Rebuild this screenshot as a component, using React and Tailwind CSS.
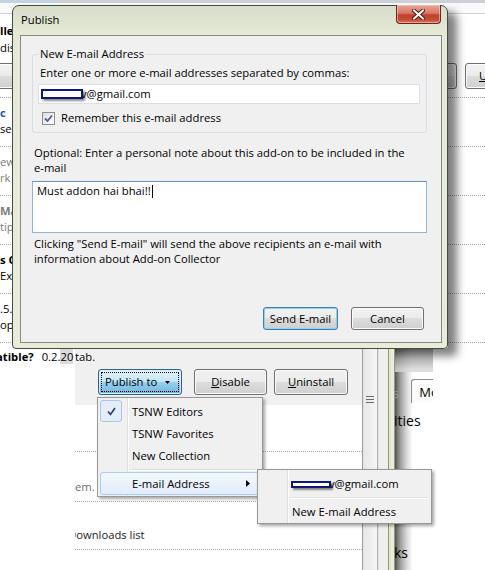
import React from "react";

const btnGray =
  "flex items-center justify-center rounded-[3px] border border-[#707070] bg-[linear-gradient(180deg,#f2f2f2_0%,#ebebeb_50%,#dddddd_50%,#cfcfcf_100%)] shadow-[inset_0_0_0_1px_#fbfbfb]";

const Redact = ({ className = "" }) => (
  <span
    className={`relative z-10 inline-block border-2 border-[#0b1a78] bg-white shadow-[2px_2px_2px_rgba(0,0,0,0.45)] ${className}`}
  />
);

const Check = () => (
  <svg width="9" height="9" viewBox="0 0 9 9">
    <path d="M1 4.5 L3.5 7.5 L8 1" fill="none" stroke="#22378a" strokeWidth="1.6" />
  </svg>
);

const CheckBox = () => (
  <div className="flex h-[13px] w-[13px] items-center justify-center border border-[#8e8f8f] bg-[linear-gradient(135deg,#dedede,#fdfdfd)]">
    <svg width="9" height="9" viewBox="0 0 9 9">
      <path d="M1 4.5 L3.5 7 L8 1.5" fill="none" stroke="#4a5f97" strokeWidth="1.8" />
    </svg>
  </div>
);

const AddonRow = ({ title, desc, titleClass = "font-bold", descClass = "" }) => (
  <div className="flex h-[49px] flex-col border-b border-dotted border-[#a8a8a8] pt-[7px] whitespace-nowrap">
    <div className={titleClass}>{title}</div>
    <div className={descClass}>{desc}</div>
  </div>
);

const AddonList = () => (
  <div className="flex flex-col">
    <div className="flex h-[3px]">
      <div className="w-[55px] bg-[#c3d3e5]" />
      <div className="flex-1 bg-[#cdd1d6]" />
    </div>
    <div className="h-[11px] border-b border-[#d2d2d2] bg-[#fafafa]" />
    <div className="flex h-[84px] flex-col border-b border-dotted border-[#a8a8a8] pt-[9px] whitespace-nowrap">
      <div className="font-bold">llector</div>
      <div className="mt-[1px]">disable</div>
      <div className="mt-[7px] flex h-[26px] justify-between">
        <div className={`${btnGray} -ml-[40px] w-[70px]`} />
        <div className="-mr-[60px] flex gap-[8px]">
          <div className={`${btnGray} w-[60px]`} />
          <div className={`${btnGray} w-[80px] justify-start pl-[13px]`}>
            <span className="underline">U</span>ninstall
          </div>
        </div>
      </div>
    </div>
    <AddonRow title="c" desc="se" titleClass="font-bold text-[#1d58b0]" />
    <AddonRow title="ew" desc="rk" titleClass="text-[#7d7d7d]" descClass="text-[#7d7d7d]" />
    <AddonRow title="Ma" desc="tip" titleClass="font-bold text-[#7d7d7d]" descClass="text-[#7d7d7d]" />
    <AddonRow title="s C" desc="Exp" />
    <AddonRow title=".5." desc="op" titleClass="" />
  </div>
);

const LowerPanel = () => (
  <div className="absolute left-0 top-[349px] z-20 flex h-[221px] w-[362px]">
    <div className="w-[75px] overflow-hidden bg-white whitespace-nowrap">
      <div className="flex h-[16px]">
        <span className="-ml-[4px] font-bold">atible?</span>
        <span className="ml-[8px]">
          0.2.<span className="bg-[#dadada]">20</span>
        </span>
      </div>
    </div>
    <div className="flex w-[287px] flex-col overflow-hidden">
      <div className="flex h-[56px] flex-col bg-[#f0f0f0]">
        <div>tab.</div>
        <div className="mt-[4px] ml-[23px] flex h-[26px]">
          <div className="flex w-[84px] rounded-[3px] border border-[#2c628b] bg-[linear-gradient(180deg,#e5f4fc_0%,#c4e5f6_50%,#98d1ef_50%,#6db6de_100%)] p-[2px] shadow-[inset_0_0_0_1px_#d9effb]">
            <div className="flex flex-1 items-center border border-dotted border-black pl-[3px]">
              Publish to
              <svg className="ml-[8px]" width="5" height="3" viewBox="0 0 5 3">
                <path d="M0 0 H5 L2.5 3 Z" fill="#000" />
              </svg>
            </div>
          </div>
          <div className={`${btnGray} ml-[12px] w-[73px]`}>
            <span className="underline">D</span>isable
          </div>
          <div className={`${btnGray} ml-[7px] w-[74px]`}>
            <span className="underline">U</span>ninstall
          </div>
        </div>
      </div>
      <div className="flex flex-1 flex-col bg-white whitespace-nowrap">
        <div className="h-[47px] border-b border-dotted border-[#a8a8a8]" />
        <div className="h-[50px] border-b border-dotted border-[#a8a8a8] pt-[27px] text-[#6d6d6d]">em.</div>
        <div className="h-[48px] border-b border-dotted border-[#a8a8a8] pt-[25px] -ml-[7px] text-[#222]">
          Downloads list
        </div>
      </div>
    </div>
  </div>
);

const SideStrip = () => (
  <div className="absolute left-[362px] top-[349px] z-20 flex h-[221px] w-[71px]">
    <div className="w-[1px] bg-[#9a9a9a]" />
    <div className="flex w-[14px] flex-col items-center bg-[linear-gradient(90deg,#e6e6e6,#f6f6f6)] pt-[47px]">
      <svg width="8" height="7" viewBox="0 0 8 7">
        <path d="M0 0.5 H8 M0 3.5 H8 M0 6.5 H8" stroke="#6a6a6a" strokeWidth="1" />
      </svg>
    </div>
    <div className="w-[1px] bg-[#b2b2b2]" />
    <div className="w-[1px] bg-[#e2e2e2]" />
    <div className="w-[9px] bg-[#efefef]" />
    <div className="w-[7px] border-x border-[#8f987f] bg-[linear-gradient(90deg,#dfe6c4,#edf0dc)]" />
    <div className="flex flex-1 flex-col overflow-hidden whitespace-nowrap bg-[linear-gradient(90deg,#555_0px,#9a9a9a_5px,#dcdcdc_12px,#fff_18px)]">
      <div className="h-[23px] bg-[linear-gradient(180deg,#2f2f2f,#9b9b9b_10px,#d6d6d6_20px)] opacity-80" />
      <div className="mt-[7px] flex h-[24px] items-end">
        <span className="mb-[2px] -ml-[2px] text-[13px] text-[#999]">s</span>
        <div className="ml-[12px] flex h-[24px] flex-1 items-center rounded-tl-[3px] border-l border-t border-[#8c8c8c] bg-[#fbfbfb] pl-[7px] text-[13px]">
          Mo
        </div>
      </div>
      <div className="mt-[9px] -ml-[1px] text-[14px] leading-[18px]">ities</div>
      <div className="mt-[114px] -ml-[1px] text-[14px] leading-[18px]">ks</div>
    </div>
  </div>
);

const CloseButton = () => (
  <div className="-mt-[1px] mr-[1px] flex h-[19px] w-[45px] items-center justify-center rounded-b-[4px] border border-t-0 border-[#6b2419] bg-[linear-gradient(180deg,#e8a394_0%,#d87a68_45%,#c2412c_55%,#c64a32_80%,#d8765a_100%)] shadow-[inset_0_0_0_1px_rgba(255,210,200,0.55)]">
    <svg width="13" height="11" viewBox="0 0 13 11">
      <path d="M2 1.5 L11 9.5 M11 1.5 L2 9.5" stroke="#4e1a12" strokeWidth="4" strokeLinecap="square" />
      <path d="M2 1.5 L11 9.5 M11 1.5 L2 9.5" stroke="#ffffff" strokeWidth="2" strokeLinecap="square" />
    </svg>
  </div>
);

const PublishDialog = () => (
  <div className="absolute left-[12px] top-[5px] z-10 flex h-[344px] w-[436px] flex-col rounded-t-[7px] rounded-b-[4px] border border-[#434c40] bg-[linear-gradient(180deg,#d7decb_0px,#e5e9d6_28px,#e9ecdb_100%)] pl-[7px] pr-[5px] pb-[5px] shadow-[9px_7px_9px_rgba(0,0,0,0.5)]">
    <div className="flex h-[29px] justify-between">
      <span className="pt-[6px] pl-[1px]">Publish</span>
      <CloseButton />
    </div>
    <div className="flex flex-1 flex-col border border-[#838d7f] bg-[#f0f0f0]">
      <fieldset className="mt-[10px] ml-[11px] mr-[14px] rounded-[3px] border border-[#d5dfe5] px-[6px] pb-[6px]">
        <legend className="px-[1px]">New E-mail Address</legend>
        <div className="mt-[3px] ml-[1px]">Enter one or more e-mail addresses separated by commas:</div>
        <div className="mt-[3px] -ml-[1px] flex h-[20px] w-[382px] items-center border border-[#dcdfe3] bg-white pl-[2px]">
          <Redact className="h-[10px] w-[42px]" />
          <span className="-ml-[2px]">v@gmail.com</span>
        </div>
        <div className="mt-[6px] ml-[3px] flex h-[16px] items-center gap-[6px]">
          <CheckBox />
          <span>Remember this e-mail address</span>
        </div>
      </fieldset>
      <div className="mt-[12px] ml-[13px] leading-[15px] whitespace-nowrap">
        <div>Optional: Enter a personal note about this add-on to be included in the</div>
        <div>e-mail</div>
      </div>
      <div className="mt-[6px] ml-[11px] h-[52px] w-[395px] border border-[#92b3d2] border-t-[#6790ba] bg-white pl-[4px] pt-[1px]">
        Must addon hai bhai!!
        <span className="ml-[1px] inline-block h-[13px] w-[1px] bg-black align-middle" />
      </div>
      <div className="mt-[3px] ml-[13px] leading-[15px] whitespace-nowrap">
        <div>Clicking "Send E-mail" will send the above recipients an e-mail with</div>
        <div>information about Add-on Collector</div>
      </div>
      <div className="mt-auto mb-[12px] mr-[17px] flex justify-end gap-[13px]">
        <div className="flex h-[23px] w-[75px] items-center justify-center rounded-[3px] border border-[#3c7fb1] bg-[linear-gradient(180deg,#f2f2f2_0%,#ebebeb_50%,#dddddd_50%,#cfcfcf_100%)] shadow-[inset_0_0_0_1px_#8fd1f3]">
          Send E-mail
        </div>
        <div className={`${btnGray} h-[23px] w-[73px]`}>Cancel</div>
      </div>
    </div>
  </div>
);

const menuBox =
  "absolute flex flex-col border border-[#979797] bg-[#f0f0f0] bg-[linear-gradient(90deg,transparent_29px,#e0e0e0_29px,#e0e0e0_30px,#ffffff_30px,#ffffff_31px,transparent_31px)] px-[2px] pt-[3px] shadow-[2px_2px_3px_rgba(0,0,0,0.35)] whitespace-nowrap";

const MenuSep = () => (
  <div className="flex h-[6px] items-center pl-[30px] pr-[1px]">
    <div className="h-[2px] flex-1 border-t border-b border-t-[#e0e0e0] border-b-white" />
  </div>
);

const PublishMenu = () => (
  <div className={`${menuBox} left-[97px] top-[397px] z-30 w-[166px] pb-[1px]`}>
    <div className="relative flex h-[22px] items-center pl-[32px]">
      <div className="absolute left-0 -top-[1px] flex h-[22px] w-[22px] items-center justify-center rounded-[3px] border border-[#a9c6e6] bg-[#e3ecf7]">
        <Check />
      </div>
      TSNW Editors
    </div>
    <div className="flex h-[22px] items-center pl-[32px]">TSNW Favorites</div>
    <div className="flex h-[22px] items-center pl-[32px]">New Collection</div>
    <MenuSep />
    <div className="-mt-[1px] flex h-[23px] w-[159px] items-center justify-between rounded-[3px] border border-[#a8cdf4] bg-[linear-gradient(180deg,#f2f7fd,#e1ecfb)] pl-[31px] pr-[8px]">
      <span>E-mail Address</span>
      <svg width="4" height="7" viewBox="0 0 4 7">
        <path d="M0 0 L4 3.5 L0 7 Z" fill="#000" />
      </svg>
    </div>
  </div>
);

const EmailSubmenu = () => (
  <div className={`${menuBox} left-[257px] top-[469px] z-40 w-[175px]`}>
    <div className="flex h-[22px] items-center pl-[31px]">
      <Redact className="h-[7px] w-[40px]" />
      <span className="-ml-[2px]">v@gmail.com</span>
    </div>
    <MenuSep />
    <div className="flex h-[22px] items-center pl-[32px]">New E-mail Address</div>
  </div>
);

export default function App() {
  return (
    <div className="relative h-[570px] w-[485px] overflow-hidden bg-white font-['Open_Sans','Noto_Sans',sans-serif] text-[11.25px] leading-[16px] text-black">
      <AddonList />
      <PublishDialog />
      <LowerPanel />
      <SideStrip />
      <PublishMenu />
      <EmailSubmenu />
    </div>
  );
}
